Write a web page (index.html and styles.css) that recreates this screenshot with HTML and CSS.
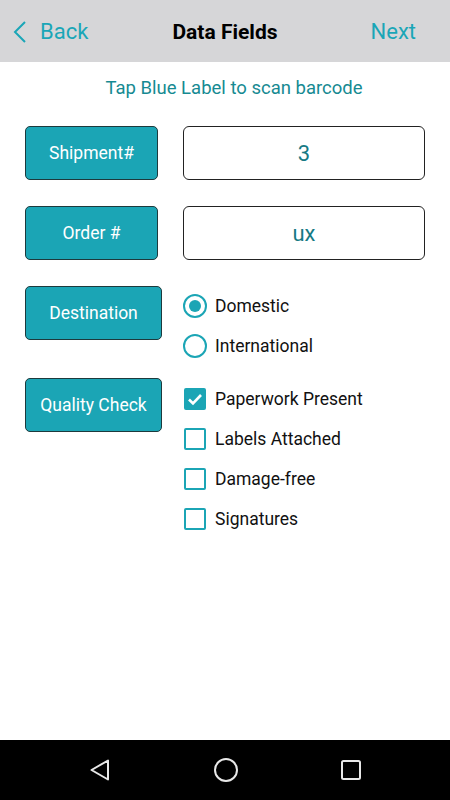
FILE: index.html
```html
<!DOCTYPE html>
<html>
<head>
<meta charset="utf-8">
<link rel="stylesheet" href="styles.css">
</head>
<body>
<div class="screen">
  <header class="topbar">
    <div class="back">
      <svg class="chev" width="16" height="24" viewBox="0 0 16 24"><path d="M13 2 L3 12 L13 22" fill="none" stroke="#1aa6b7" stroke-width="2"/></svg>
      <span>Back</span>
    </div>
    <div class="title">Data Fields</div>
    <div class="next">Next</div>
  </header>
  <main class="content">
    <p class="hint">Tap Blue Label to scan barcode</p>
    <div class="row">
      <button class="label narrow">Shipment#</button>
      <div class="field">3</div>
    </div>
    <div class="row">
      <button class="label narrow">Order #</button>
      <div class="field">ux</div>
    </div>
    <div class="row top dest">
      <button class="label">Destination</button>
      <div class="options">
        <div class="opt"><span class="radio on"></span>Domestic</div>
        <div class="opt"><span class="radio"></span>International</div>
      </div>
    </div>
    <div class="row top qc">
      <button class="label">Quality Check</button>
      <div class="options">
        <div class="opt"><span class="check on"><svg width="22" height="22" viewBox="0 0 22 22"><path d="M5 11.5 L9 15.5 L17 7" fill="none" stroke="#fff" stroke-width="2.6"/></svg></span>Paperwork Present</div>
        <div class="opt"><span class="check"></span>Labels Attached</div>
        <div class="opt"><span class="check"></span>Damage-free</div>
        <div class="opt"><span class="check"></span>Signatures</div>
      </div>
    </div>
  </main>
  <nav class="navbar">
    <svg width="22" height="24" viewBox="0 0 22 24"><path d="M19 2.5 L19 21.5 L2.5 12 Z" fill="none" stroke="#e8e8e8" stroke-width="2" stroke-linejoin="round"/></svg>
    <svg width="26" height="26" viewBox="0 0 26 26"><circle cx="13" cy="13" r="11" fill="none" stroke="#e8e8e8" stroke-width="2"/></svg>
    <svg width="22" height="22" viewBox="0 0 22 22"><rect x="2" y="2" width="18" height="18" rx="1.5" fill="none" stroke="#e8e8e8" stroke-width="2"/></svg>
  </nav>
</div>
</body>
</html>
```
FILE: styles.css
```css
* { box-sizing: border-box; }
html, body { margin: 0; padding: 0; }
body { font-family: Roboto, "Liberation Sans", sans-serif; background: #fff; }
.screen { width: 450px; height: 800px; display: flex; flex-direction: column; }
.topbar {
  height: 62px; background: #d6d6d8;
  display: grid; grid-template-columns: 1fr auto 1fr; align-items: center;
  padding: 0 12px;
}
.back { display: flex; align-items: center; gap: 12px; color: #1aa6b7; font-size: 22px; }
.chev { margin-top: 2px; }
.title { font-weight: 700; font-size: 21px; color: #000; margin-top: 2px; }
.next { justify-self: end; color: #1aa6b7; font-size: 22px; margin-right: 22px; margin-top: 1px; }
.content { flex: 1; padding: 0 25px; }
.hint { margin: 15px 0 27px; padding-left: 18px; text-align: center; color: #168a92; font-size: 18.5px; line-height: 22px; }
.row { display: flex; align-items: center; gap: 25px; margin-bottom: 26px; }
.row.top { align-items: flex-start; }
.label {
  width: 137px; height: 54px; flex: none;
  background: #1ba5b5; color: #fff; border: 1px solid #1d3a3d; border-radius: 5px;
  font-family: inherit; font-size: 17.5px; padding: 0;
}
.label.narrow { width: 133px; }
.field {
  flex: 1; height: 54px; border: 1px solid #222; border-radius: 6px;
  display: flex; align-items: center; justify-content: center;
  color: #167a84; font-size: 22px;
}
.options { display: flex; flex-direction: column; margin-left: -4px; }
.dest { margin-bottom: 20px; }
.dest .options { margin-top: 8px; gap: 16px; }
.qc .options { margin-top: 10px; gap: 18px; }
.opt { display: flex; align-items: center; gap: 8px; font-size: 17.5px; color: #111; height: 22px; }
.dest .opt { height: 24px; }
.radio { width: 24px; height: 24px; border: 2.5px solid #1ba5b5; border-radius: 50%; display: flex; align-items: center; justify-content: center; flex: none; }
.radio.on::after { content: ""; width: 12px; height: 12px; border-radius: 50%; background: #1ba5b5; }
.check { width: 22px; height: 22px; border: 2.5px solid #1ba5b5; border-radius: 2px; flex: none; margin: 0 1px; position: relative; }
.check.on { background: #1ba5b5; }
.check svg { position: absolute; left: -2.5px; top: -2.5px; }
.navbar { height: 60px; background: #000; display: flex; align-items: center; justify-content: space-between; padding: 0 88px 0 89px; }
```
